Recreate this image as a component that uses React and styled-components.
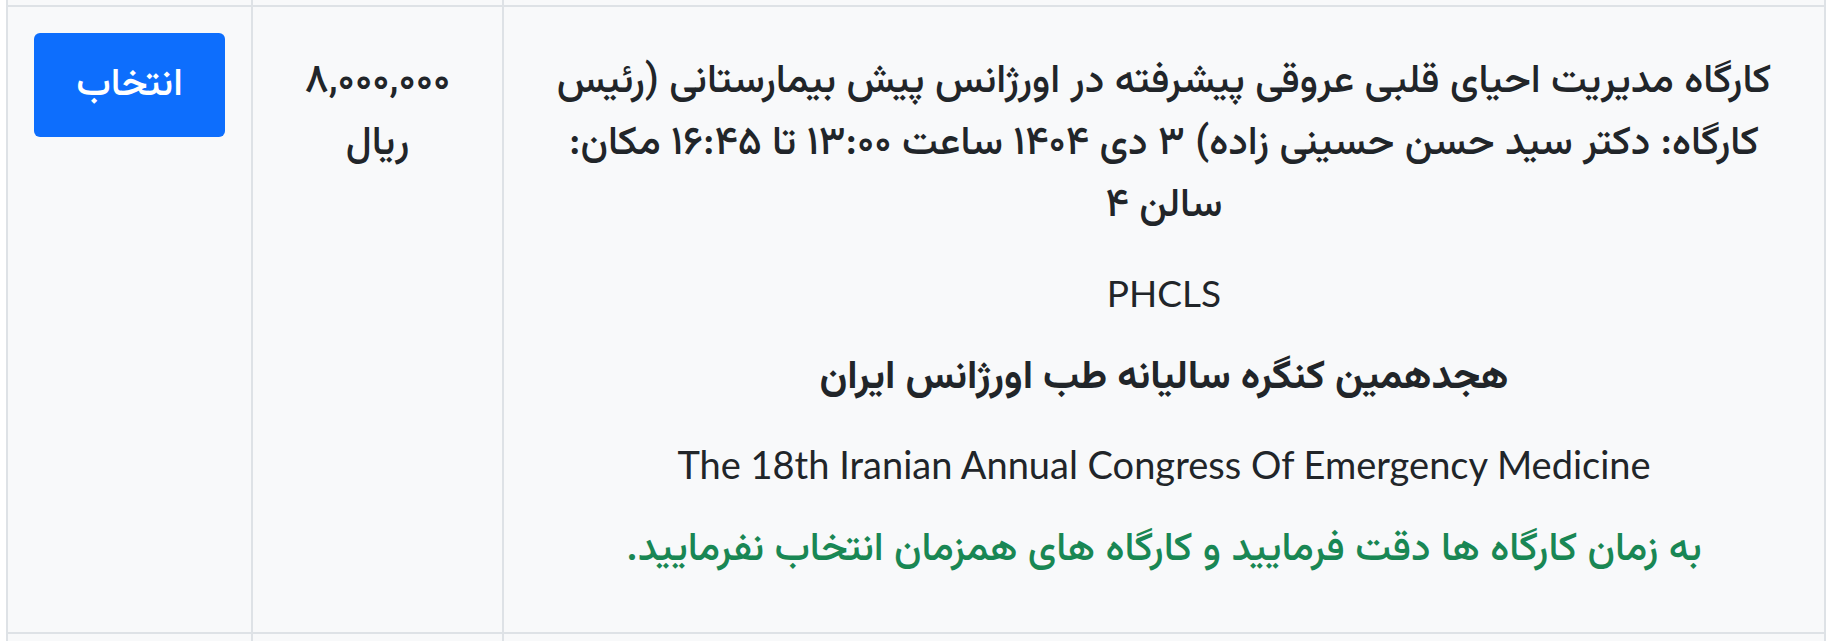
import React from 'react';
import styled, { createGlobalStyle } from 'styled-components';

const GlobalStyle = createGlobalStyle`
    html, body {
        margin: 0;
        padding: 0;
        background: #ffffff;
    }
    body {
        overflow: hidden;
        font-family: "Vazirmatn", "Noto Sans Arabic", "DejaVu Sans", sans-serif;
        color: #212529;
    }
`;

const Page = styled.div`
    height: 641px;
    overflow: hidden;
    padding: 0 7px 0 6px;
`;

const Table = styled.table`
    width: 100%;
    border-collapse: collapse;
    direction: rtl;
    table-layout: fixed;
`;

const Cell = styled.td`
    background: #f8f9fa;
    border: 2px solid #dee2e6;
    padding: ${p => (p.$cut ? '0' : '26px')};
    height: ${p => (p.$cut ? `${p.$cut}px` : 'auto')};
    vertical-align: top;
    text-align: center;
    ${p => p.$first && 'border-top: none;'}
`;

const Title = styled.p`
    margin: 18px 0 25px;
    font-size: 40px;
    line-height: 62px;
    font-weight: 500;
`;

const Line = styled.p`
    margin: 0 0 25px;
    font-size: ${p => p.$size || '40px'};
    line-height: 61px;
    font-weight: ${p => p.$weight || 400};
    color: ${p => p.$color || '#212529'};
    font-family: ${p => (p.$latin ? 'Lato, "Open Sans", sans-serif' : 'inherit')};
`;

const Price = styled.div`
    margin-top: 18px;
    font-size: 40px;
    line-height: 62px;
    font-weight: 500;
`;

const SelectButton = styled.button`
    width: 100%;
    height: 104px;
    border: none;
    border-radius: 6px;
    background: #0d6efd;
    color: #ffffff;
    font-family: inherit;
    font-size: 39px;
    font-weight: 500;
    cursor: pointer;
    &:hover {
        background: #0b5ed7;
    }
`;

const App = () => {
    return (
        <Page>
            <GlobalStyle />
            <Table>
                <colgroup>
                    <col style={{ width: '1322px' }} />
                    <col style={{ width: '251px' }} />
                    <col />
                </colgroup>
                <tbody>
                    <tr>
                        <Cell $cut={5} $first />
                        <Cell $cut={5} $first />
                        <Cell $cut={5} $first />
                    </tr>
                    <tr>
                        <Cell>
                            <Title>
                                کارگاه مدیریت احیای قلبی عروقی پیشرفته در اورژانس پیش بیمارستانی (رئیس کارگاه: دکتر سید حسن حسینی زاده) ۳ دی ۱۴۰۴ ساعت ۱۳:۰۰ تا ۱۶:۴۵ مکان: سالن ۴
                            </Title>
                            <Line $latin $size="37px">PHCLS</Line>
                            <Line $weight={700}>هجدهمین کنگره سالیانه طب اورژانس ایران</Line>
                            <Line $latin $size="38px">The 18th Iranian Annual Congress Of Emergency Medicine</Line>
                            <Line $color="#198754" $weight={500}>
                                به زمان کارگاه ها دقت فرمایید و کارگاه های همزمان انتخاب نفرمایید.
                            </Line>
                        </Cell>
                        <Cell>
                            <Price>
                                ۸,۰۰۰,۰۰۰
                                <br />
                                ریال
                            </Price>
                        </Cell>
                        <Cell>
                            <SelectButton>انتخاب</SelectButton>
                        </Cell>
                    </tr>
                    <tr>
                        <Cell $cut={40} />
                        <Cell $cut={40} />
                        <Cell $cut={40} />
                    </tr>
                </tbody>
            </Table>
        </Page>
    );
};

export default App;
